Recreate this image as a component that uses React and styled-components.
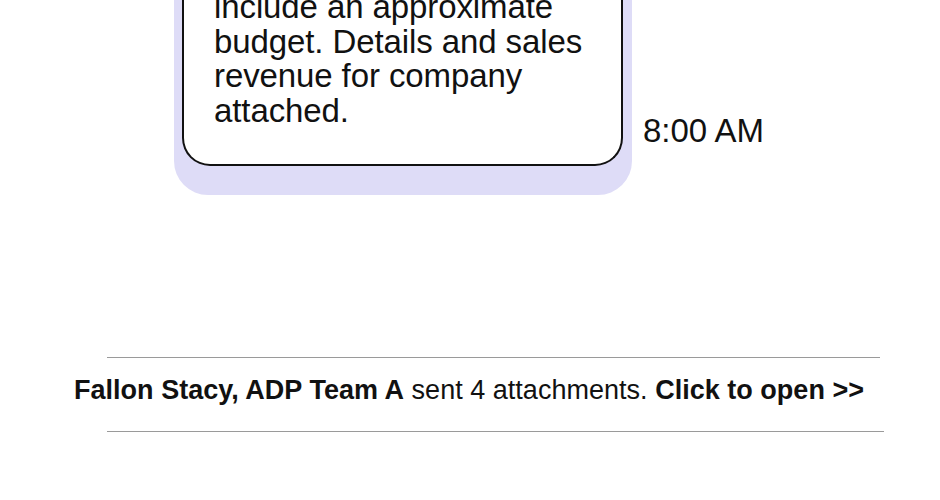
import React from "react";
import styled, { createGlobalStyle } from "styled-components";

const GlobalStyle = createGlobalStyle`
  html, body {
    margin: 0;
    padding: 0;
    background: #fff;
    overflow: hidden;
  }
  body {
    font-family: "Liberation Sans", Arial, Helvetica, sans-serif;
    color: #111;
  }
`;

const Page = styled.div`
  width: 940px;
  height: 500px;
  overflow: hidden;
`;

// message row: bubble + timestamp
const Thread = styled.div`
  display: flex;
  align-items: flex-end;
  gap: 11px;
  margin-top: -44px;
  padding-left: 174px;
`;

const BubbleShadow = styled.div`
  background: #dedcf7;
  border-radius: 34px;
  padding: 0 9px 29px 8px;
`;

const Bubble = styled.div`
  width: 407px;
  background: #fff;
  border: 2px solid #111;
  border-top: 0;
  border-radius: 0 0 28px 28px;
  padding: 34px 0 36px 30px;
  font-size: 33px;
  line-height: 34.5px;
  letter-spacing: -0.1px;
`;

const Time = styled.span`
  font-size: 33px;
  line-height: 1;
  margin-bottom: 48px;
`;

// attachment notice between two rules
const Notice = styled.div`
  margin-top: 162px;
  display: flex;
  flex-direction: column;
`;

const Rule = styled.hr`
  margin: 0 0 0 ${({ left }) => left}px;
  width: ${({ width }) => width}px;
  border: 0;
  border-top: 1px solid #9a9a9a;
`;

const NoticeText = styled.p`
  margin: 0;
  padding: 17px 0 0 74px;
  height: 73px;
  box-sizing: border-box;
  font-size: 27px;
  line-height: 30px;
  letter-spacing: 0.02px;
  white-space: nowrap;
  b {
    font-weight: 700;
  }
`;

export default function App() {
  return (
    <Page>
      <GlobalStyle />
      <Thread>
        <BubbleShadow>
          <Bubble>
            include an approximate
            <br />
            budget. Details and sales
            <br />
            revenue for company
            <br />
            attached.
          </Bubble>
        </BubbleShadow>
        <Time>8:00 AM</Time>
      </Thread>
      <Notice>
        <Rule left={107} width={773} />
        <NoticeText>
          <b>Fallon Stacy, ADP Team A</b> sent 4 attachments. <b>Click to open &gt;&gt;</b>
        </NoticeText>
        <Rule left={107} width={777} />
      </Notice>
    </Page>
  );
}
